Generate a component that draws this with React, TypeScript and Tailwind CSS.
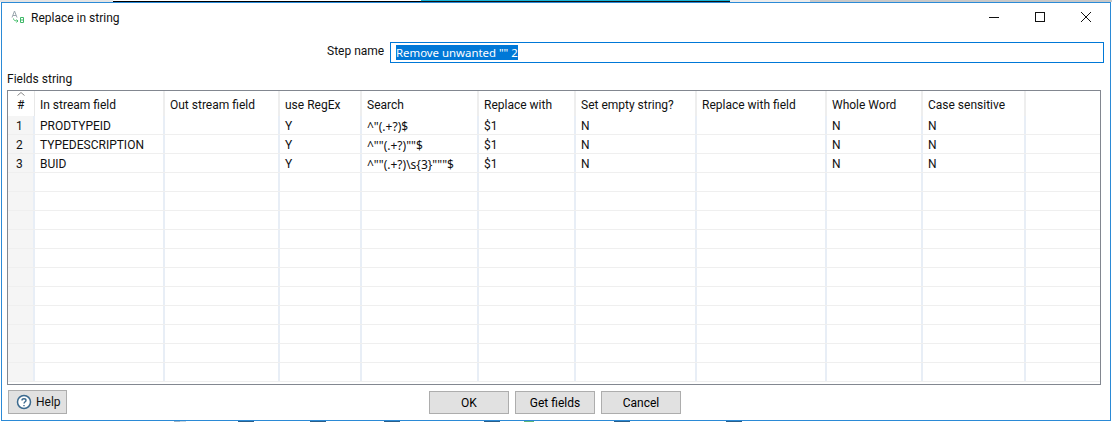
const font = "[font-family:'Roboto','Noto_Sans',sans-serif]"

const columns = [
  { label: 'In stream field', width: 'w-[130px]' },
  { label: 'Out stream field', width: 'w-[115px]' },
  { label: 'use RegEx', width: 'w-[82px]' },
  { label: 'Search', width: 'w-[117px]' },
  { label: 'Replace with', width: 'w-[97px]' },
  { label: 'Set empty string?', width: 'w-[121px]' },
  { label: 'Replace with field', width: 'w-[130px]' },
  { label: 'Whole Word', width: 'w-[96px]' },
  { label: 'Case sensitive', width: 'w-[103px]' },
]

const rows = [
  ['PRODTYPEID', '', 'Y', '^"(.+?)$', '$1', 'N', '', 'N', 'N'],
  ['TYPEDESCRIPTION', '', 'Y', '^""(.+?)""$', '$1', 'N', '', 'N', 'N'],
  ['BUID', '', 'Y', '^""(.+?)\\s{3}"""$', '$1', 'N', '', 'N', 'N'],
  ...Array.from({ length: 11 }, () => ['', '', '', '', '', '', '', '', '']),
]

// bits of the desktop that show under the dialog
const bottomBits = [
  { w: 'w-[174px]', c: 'bg-white' },
  { w: 'w-[6px]', c: 'bg-[#9fb4c6]' },
  { w: 'w-[6px]', c: 'bg-[#c9d6e0]' },
  { w: 'w-[52px]', c: 'bg-white' },
  { w: 'w-[16px]', c: 'bg-[#2b5f8a]' },
  { w: 'w-[56px]', c: 'bg-white' },
  { w: 'w-[16px]', c: 'bg-[#2b5f8a]' },
  { w: 'w-[58px]', c: 'bg-white' },
  { w: 'w-[16px]', c: 'bg-[#2b5f8a]' },
  { w: 'w-[84px]', c: 'bg-white' },
  { w: 'w-[16px]', c: 'bg-[#2b5f8a]' },
  { w: 'w-[24px]', c: 'bg-white' },
  { w: 'w-[10px]', c: 'bg-[#5fb878]' },
  { w: 'w-[80px]', c: 'bg-white' },
  { w: 'w-[16px]', c: 'bg-[#2b5f8a]' },
  { w: 'w-[96px]', c: 'bg-white' },
  { w: 'w-[16px]', c: 'bg-[#2b5f8a]' },
  { w: 'w-[370px]', c: 'bg-white' },
]

function DialogButton({ label }: { label: string }) {
  return (
    <button className="w-[80px] h-[23px] bg-[#e1e1e1] border border-[#adadad] text-[12px] text-black">
      {label}
    </button>
  )
}

export default function App() {
  return (
    <div className={`w-[1112px] h-[422px] overflow-hidden bg-white text-[12px] text-[#111] ${font}`}>
      <div className="flex h-[2px]">
        <div className="w-[113px] bg-[#e4e4e4]" />
        <div className="w-[308px] bg-white border-b border-black" />
        <div className="w-[309px] bg-[#17b4d8] border-b border-[#111]" />
        <div className="w-[80px] bg-[#ececec]" />
        <div className="flex-1 bg-[#c8c8c8]" />
      </div>
      <div className="h-[419px] mx-px bg-white border border-[#2b8ad6] flex flex-col">
        <div className="h-[30px] flex items-center shrink-0">
          <svg width="16" height="16" viewBox="0 0 16 16" className="ml-[8px] mr-[5px]" fill="none">
            <path d="M2 7.5 L4.5 1 L7 7.5 M3 5.5 H6" stroke="#9aa5ad" strokeWidth="1" />
            <path d="M3.5 8.5 C3.5 10.5 5 11 8 11 M6.5 9.5 L8 11 L6.5 12.5" stroke="#4cc070" strokeWidth="1" />
            <path d="M10.5 7.5 H13.5 V12.5 H10.5 Z M10.5 10 H13.5" stroke="#3fb868" strokeWidth="1" />
          </svg>
          <span>Replace in string</span>
          <div className="ml-auto mb-[2px] mr-[-1px] flex items-center">
            <svg width="46" height="16" viewBox="0 0 46 16">
              <path d="M18 8.5 H28" stroke="#111" />
            </svg>
            <svg width="46" height="16" viewBox="0 0 46 16">
              <rect x="18.5" y="3.5" width="9" height="9" fill="none" stroke="#111" />
            </svg>
            <svg width="46" height="16" viewBox="0 0 46 16" className="mr-[2px]">
              <path d="M18 3 L28 13 M28 3 L18 13" stroke="#111" />
            </svg>
          </div>
        </div>
        <div className="h-[21px] mt-[9px] flex items-center shrink-0">
          <span className="ml-[325px] w-[63px] mb-[4px] whitespace-nowrap">Step name</span>
          <div className="w-[714px] h-[21px] border border-[#0078d7] flex items-center pl-[5px]">
            <span className="bg-[#0078d7] text-white h-[15px] leading-[15px] whitespace-pre text-[11.4px] [font-family:'Noto_Sans',sans-serif]">Remove unwanted "" 2</span>
          </div>
        </div>
        <div className="ml-[5px] mt-[7px] h-[20px] leading-[18px] shrink-0">Fields string</div>
        <div className="ml-[5px] w-[1094px] h-[295px] border border-[#828790] overflow-hidden shrink-0">
          <div className="flex h-[25px]">
            <div className="relative w-[27px] border-r border-[#e8e8e8] pl-[9px] pt-[5px] shrink-0">
              #
              <svg width="8" height="4" viewBox="0 0 8 4" className="absolute left-[9px] top-[1px]">
                <path d="M0.5 3.5 L4 0.5 L7.5 3.5" fill="none" stroke="#888" />
              </svg>
            </div>
            {columns.map((c) => (
              <div key={c.label} className={`${c.width} shrink-0 border-r-2 border-[#eeeeee] pl-[5px] pt-[5px] whitespace-nowrap`}>
                {c.label}
              </div>
            ))}
          </div>
          {rows.map((row, i) => (
            <div key={i} className="flex h-[19px] border-b border-[#efefef]">
              <div className="w-[27px] shrink-0 bg-[#f5f5f5] border-r-2 border-[#e8eef6] pl-[8px] leading-[21px]">
                {i < 3 ? i + 1 : ''}
              </div>
              {row.map((cell, j) => (
                <div
                  key={j}
                  className={`${columns[j].width} shrink-0 border-r-2 border-[#e8eef6] pl-[5px] leading-[21px] whitespace-nowrap ${j === 3 ? "[font-family:'Noto_Sans',sans-serif]" : ''}`}
                >
                  {cell}
                </div>
              ))}
            </div>
          ))}
        </div>
        <div className="relative flex justify-center gap-[6px] mt-[6px] pr-[2px] shrink-0">
          <button className="absolute left-[6px] top-[-1px] w-[59px] h-[24px] bg-[#e1e1e1] border border-[#adadad] flex items-center pl-[7px] gap-[4px]">
            <svg width="16" height="16" viewBox="0 0 16 16">
              <circle cx="8" cy="8" r="6.5" fill="#fff" stroke="#3b6a8f" strokeWidth="1.5" />
              <path d="M6 6.4 C6 4.2 10 4.2 10 6.4 C10 7.8 8 7.8 8 9.6 M8 11 V12.2" fill="none" stroke="#3b6a8f" strokeWidth="1.4" />
            </svg>
            Help
          </button>
          <DialogButton label="OK" />
          <DialogButton label="Get fields" />
          <DialogButton label="Cancel" />
        </div>
      </div>
      <div className="flex h-px">
        {bottomBits.map((b, i) => (
          <div key={i} className={`${b.w} ${b.c}`} />
        ))}
      </div>
    </div>
  )
}
